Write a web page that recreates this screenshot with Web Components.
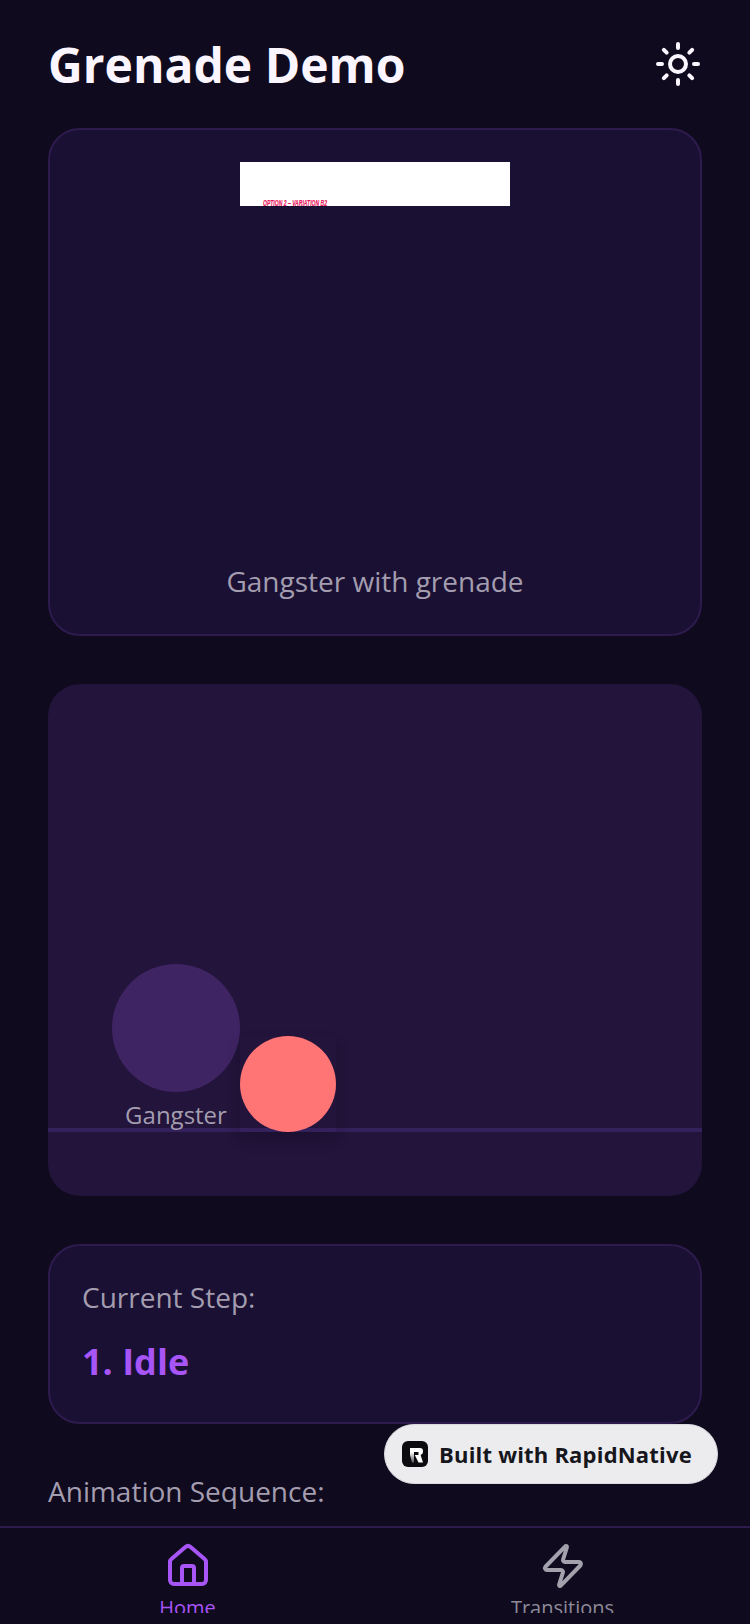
<!DOCTYPE html>
<html>
<head>
<meta charset="utf-8">
<title>Grenade Demo</title>
<style>
html, body { margin: 0; height: 100%; background: #0f0a1e; }
body { font-family: "Open Sans", sans-serif; overflow: hidden; }
</style>
</head>
<body>
<demo-app>
  <demo-header slot="header" title="Grenade Demo"></demo-header>
  <demo-hero caption="Gangster with grenade"></demo-hero>
  <demo-stage label="Gangster"></demo-stage>
  <demo-step heading="Current Step:" value="1. Idle"></demo-step>
  <demo-section>Animation Sequence:</demo-section>
  <demo-badge slot="overlay">Built with RapidNative</demo-badge>
  <demo-tabs slot="tabs">
    <demo-tab icon="home" active>Home</demo-tab>
    <demo-tab icon="zap">Transitions</demo-tab>
  </demo-tabs>
</demo-app>
<script>
const ICONS = {
  sun: '<circle cx="12" cy="12" r="4"/><path d="M12 2v2M12 20v2M4.93 4.93l1.41 1.41M17.66 17.66l1.41 1.41M2 12h2M20 12h2M6.34 17.66l-1.41 1.41M19.07 4.93l-1.41 1.41"/>',
  home: '<path d="M15 21v-8a1 1 0 0 0-1-1h-4a1 1 0 0 0-1 1v8"/><path d="M3 10a2 2 0 0 1 .709-1.528l7-5.999a2 2 0 0 1 2.582 0l7 5.999A2 2 0 0 1 21 10v9a2 2 0 0 1-2 2H5a2 2 0 0 1-2-2z"/>',
  zap: '<path d="M4 14a1 1 0 0 1-.78-1.63l9.9-10.2a.5.5 0 0 1 .86.46l-1.92 6.02A1 1 0 0 0 13 10h7a1 1 0 0 1 .78 1.63l-9.9 10.2a.5.5 0 0 1-.86-.46l1.92-6.02A1 1 0 0 0 11 14z"/>'
}

function icon(name, size, color) {
  return `<svg width="${size}" height="${size}" viewBox="0 0 24 24" fill="none" stroke="${color}" stroke-width="2" stroke-linecap="round" stroke-linejoin="round">${ICONS[name]}</svg>`
}

// Base class, every element just sets its shadow html from render()
class DemoElement extends HTMLElement {
  connectedCallback() {
    if (this.shadowRoot) return
    this.attachShadow({mode: 'open'}).innerHTML = this.render()
  }
}

class DemoApp extends DemoElement {
  render() {
    return `
<style>
:host { display: flex; flex-direction: column; position: relative; width: 750px; height: 1624px; overflow: hidden; background: #0f0a1e; }
.scroll { flex: 1; min-height: 0; overflow: hidden; padding: 0 48px; display: flex; flex-direction: column; }
.overlay { position: absolute; left: 384px; top: 1424px; }
</style>
<div class="scroll"><slot name="header"></slot><slot></slot></div>
<div class="overlay"><slot name="overlay"></slot></div>
<slot name="tabs"></slot>`
  }
}

class DemoHeader extends DemoElement {
  render() {
    return `
<style>
:host { display: flex; align-items: center; justify-content: space-between; height: 128px; flex: none; }
h1 { margin: 1px 0 0; font-size: 48px; line-height: 64px; font-weight: 700; color: #faf5ff; }
svg { display: block; }
</style>
<h1>${this.getAttribute('title')}</h1>
${icon('sun', 48, '#faf5ff')}`
  }
}

class DemoHero extends DemoElement {
  render() {
    return `
<style>
:host { display: flex; flex-direction: column; align-items: center; box-sizing: border-box; height: 508px; flex: none; padding: 32px 32px 0; background: #1a1033; border: 2px solid #2d1b4e; border-radius: 32px; }
.pic { width: 270px; height: 44px; background: #fff; overflow: hidden; flex: none; }
.pic span { display: block; margin: 36px 0 0 23px; font: italic 700 9px/10px "Liberation Sans", sans-serif; color: #e8175d; -webkit-text-stroke: .2px #e8175d; white-space: nowrap; transform: scaleX(.56); transform-origin: left; }
.cap { margin-top: auto; margin-bottom: 34px; font-size: 28px; line-height: 38px; color: #a39daf; }
</style>
<div class="pic"><span>OPTION 2 – VARIATION B2</span></div>
<div class="cap">${this.getAttribute('caption')}</div>`
  }
}

class DemoStage extends DemoElement {
  render() {
    return `
<style>
:host { display: block; position: relative; box-sizing: border-box; height: 512px; flex: none; margin-top: 48px; background: #22143a; border-radius: 32px; overflow: hidden; }
.ground { position: absolute; left: 0; right: 0; top: 444px; height: 4px; background: #34205a; }
.gangster { position: absolute; left: 64px; top: 280px; width: 128px; height: 128px; border-radius: 50%; background: #3f2463; }
.label { position: absolute; left: 64px; top: 415px; width: 128px; text-align: center; font-size: 24px; line-height: 32px; color: #a39daf; }
.grenade { position: absolute; left: 192px; top: 352px; width: 96px; height: 96px; border-radius: 50%; background: #ff7474; }
.shadow { position: absolute; left: 192px; top: 352px; width: 96px; height: 96px; box-shadow: 0 8px 12px rgba(12,6,28,.28); }
</style>
<div class="ground"></div>
<div class="gangster"></div>
<div class="label">${this.getAttribute('label')}</div>
<div class="shadow"></div>
<div class="grenade"></div>`
  }
}

class DemoStep extends DemoElement {
  render() {
    return `
<style>
:host { display: block; box-sizing: border-box; height: 180px; flex: none; margin-top: 48px; padding: 32px; background: #1a1033; border: 2px solid #2d1b4e; border-radius: 32px; }
.h { font-size: 28px; line-height: 38px; color: #a39daf; }
.v { margin-top: 22px; font-size: 36px; line-height: 48px; font-weight: 700; color: #a855f7; }
</style>
<div class="h">${this.getAttribute('heading')}</div>
<div class="v">${this.getAttribute('value')}</div>`
  }
}

class DemoSection extends DemoElement {
  render() {
    return `
<style>
:host { display: block; flex: none; margin-top: 48px; font-size: 28px; line-height: 38px; color: #a39daf; }
</style>
<slot></slot>`
  }
}

class DemoBadge extends DemoElement {
  render() {
    return `
<style>
:host { display: flex; align-items: center; gap: 11px; box-sizing: border-box; width: 334px; height: 60px; padding: 0 17px; background: #ececef; border: 1px solid #d8d8de; border-radius: 30px; font-size: 22px; font-weight: 700; letter-spacing: .2px; color: #16161c; white-space: nowrap; }
svg { display: block; flex: none; }
</style>
<svg width="26" height="26" viewBox="0 0 26 26">
  <defs><linearGradient id="stem" x1="0" y1="0" x2="0" y2="1"><stop offset="0" stop-color="#fff"/><stop offset="1" stop-color="#555"/></linearGradient></defs>
  <rect width="26" height="26" rx="6" fill="#0c0c10"/>
  <path d="M8 7H18Q21 7 21 10V11Q21 13 18.6 14L21 21.5H16.5L12.8 14H16.5V11H8Z" fill="#fff"/>
  <path d="M8 11H12V21.5H10L8 14Z" fill="url(#stem)"/>
</svg>
<slot></slot>`
  }
}

class DemoTabs extends DemoElement {
  render() {
    return `
<style>
:host { display: flex; flex: none; box-sizing: border-box; height: 98px; background: #0f0a1e; border-top: 2px solid #2d1b4e; }
</style>
<slot></slot>`
  }
}

class DemoTab extends DemoElement {
  render() {
    const active = this.hasAttribute('active')
    const color = active ? '#a855f7' : '#a3a1ab'
    return `
<style>
:host { display: flex; flex-direction: column; align-items: center; flex: 1; padding-top: 14px; height: 85px; overflow: hidden; box-sizing: border-box; }
svg { display: block; flex: none; }
.t { margin-top: 4px; font-size: 20px; line-height: 28px; color: ${active ? color : '#8d8b97'}; }
</style>
${icon(this.getAttribute('icon'), 48, color)}
<div class="t"><slot></slot></div>`
  }
}

customElements.define('demo-app', DemoApp)
customElements.define('demo-header', DemoHeader)
customElements.define('demo-hero', DemoHero)
customElements.define('demo-stage', DemoStage)
customElements.define('demo-step', DemoStep)
customElements.define('demo-section', DemoSection)
customElements.define('demo-badge', DemoBadge)
customElements.define('demo-tabs', DemoTabs)
customElements.define('demo-tab', DemoTab)
</script>
</body>
</html>
